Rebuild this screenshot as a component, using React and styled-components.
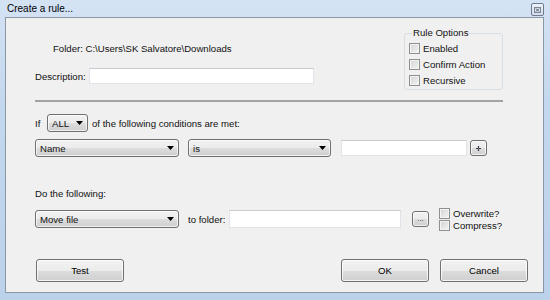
import React from 'react';
import styled, { createGlobalStyle } from 'styled-components';

const GlobalStyle = createGlobalStyle`
  html, body {
    margin: 0;
    padding: 0;
  }
  body {
    width: 550px;
    height: 300px;
    overflow: hidden;
    font-family: "Liberation Sans", Arial, sans-serif;
    font-size: 9.6px;
    color: #111;
  }
`;

const Frame = styled.div`
  width: 550px;
  height: 300px;
  box-sizing: border-box;
  display: flex;
  flex-direction: column;
  padding: 0 6px 7px 5px;
  background: linear-gradient(180deg, #d4e3f4 0%, #c3d7ee 35%, #bcd1ea 100%);
`;

const TitleBar = styled.div`
  height: 17px;
  display: flex;
  align-items: flex-start;
  justify-content: space-between;
  padding-left: 2px;
`;

const Title = styled.span`
  font-size: 10px;
  line-height: 17px;
  color: #000;
`;

const CloseButton = styled.div`
  width: 13px;
  height: 13px;
  margin-top: 3px;
  box-sizing: border-box;
  border: 1px solid #6f7b8a;
  border-radius: 2px;
  background: linear-gradient(180deg, #eef3f9, #d2dded);
  display: flex;
  align-items: center;
  justify-content: center;
`;

const Client = styled.div`
  flex: 1;
  display: flex;
  flex-direction: column;
  background: #f0f0f0;
  border: 1px solid #8a97a6;
  padding: 0 15px 0 29px;
`;

const TopSection = styled.div`
  display: flex;
  justify-content: space-between;
  align-items: flex-start;
  padding-top: 9px;
  margin-right: 25px;
`;

const LeftCol = styled.div`
  margin-top: 15px;
  display: flex;
  flex-direction: column;
`;

const FolderLine = styled.div`
  margin-left: 18px;
  line-height: 14px;
`;

const Row = styled.div`
  display: flex;
  align-items: center;
  height: ${p => p.h || 18}px;
  margin-top: ${p => p.mt || 0}px;
`;

const Label = styled.span`
  width: ${p => (p.w ? `${p.w}px` : 'auto')};
  margin-left: ${p => p.ml || 0}px;
  flex-shrink: 0;
  white-space: nowrap;
`;

const TextBox = styled.div`
  width: ${p => p.w}px;
  height: ${p => p.h || 16}px;
  margin-left: ${p => p.ml || 0}px;
  box-sizing: border-box;
  background: #fff;
  border: 1px solid #e2e3ea;
  border-top-color: #c9cbd2;
  flex-shrink: 0;
`;

const Group = styled.fieldset`
  margin: 0;
  width: 99px;
  box-sizing: border-box;
  padding: 1px 4px 1px 4px;
  border: 1px solid #d8dfe4;
  border-radius: 3px;
`;

const Legend = styled.legend`
  padding: 0 1px;
  margin-left: 3px;
  line-height: 12px;
  font-size: 9.6px;
`;

const CheckRow = styled.div`
  display: flex;
  align-items: center;
  height: ${p => p.h || 16}px;
`;

const Check = styled.span`
  width: 11px;
  height: 11px;
  box-sizing: border-box;
  border: 1px solid #8e8f8f;
  background: linear-gradient(135deg, #d2d2d2, #f4f4f4);
  box-shadow: inset 0 0 0 1px #f4f4f4;
  margin-right: 3px;
  flex-shrink: 0;
`;

const Separator = styled.div`
  margin-top: 10px;
  margin-right: 25px;
  height: 2px;
  background: #a3a3a3;
`;

const Combo = styled.div`
  width: ${p => p.w}px;
  height: 18px;
  margin-left: ${p => p.ml || 0}px;
  box-sizing: border-box;
  border: 1px solid #707070;
  border-radius: 3px;
  background: linear-gradient(180deg, #f2f2f2 0%, #ebebeb 50%, #dddddd 51%, #cfcfcf 100%);
  box-shadow: inset 0 0 0 1px rgba(255, 255, 255, 0.7);
  display: flex;
  align-items: center;
  justify-content: space-between;
  padding: 0 4px 0 4px;
  flex-shrink: 0;
`;

const Arrow = () => (
  <svg width="7" height="4" viewBox="0 0 7 4">
    <path d="M0 0 H7 L3.5 4 Z" fill="#000" />
  </svg>
);

const SmallButton = styled.div`
  width: 17px;
  height: 16px;
  margin-left: ${p => p.ml || 0}px;
  box-sizing: border-box;
  border: 1px solid #707070;
  border-radius: 3px;
  background: linear-gradient(180deg, #f2f2f2 0%, #ebebeb 50%, #dddddd 51%, #cfcfcf 100%);
  box-shadow: inset 0 0 0 1px rgba(255, 255, 255, 0.7);
  display: flex;
  align-items: center;
  justify-content: center;
  font-size: 8px;
  line-height: 8px;
  color: #333;
  flex-shrink: 0;
`;

const CheckStack = styled.div`
  margin-left: 10px;
  display: flex;
  flex-direction: column;
`;

const ButtonRow = styled.div`
  margin-top: 31px;
  display: flex;
  justify-content: space-between;
`;

const ButtonGroup = styled.div`
  display: flex;
  gap: 11px;
`;

const Button = styled.div`
  width: 88px;
  height: 23px;
  margin-left: ${p => p.ml || 0}px;
  box-sizing: border-box;
  border: 1px solid #707070;
  border-radius: 3px;
  background: linear-gradient(180deg, #f2f2f2 0%, #ebebeb 50%, #dddddd 51%, #cfcfcf 100%);
  box-shadow: inset 0 0 0 1px rgba(255, 255, 255, 0.75);
  display: flex;
  align-items: center;
  justify-content: center;
  color: #000;
`;

export default function App() {
  return (
    <Frame>
      <GlobalStyle />
      <TitleBar>
        <Title>Create a rule...</Title>
        <CloseButton>
          <svg width="7" height="6" viewBox="0 0 7 6">
            <rect x="0.5" y="0.5" width="6" height="5" fill="none" stroke="#7d8794" />
            <path d="M2 1.5 L5 4.5 M5 1.5 L2 4.5" stroke="#4a5463" strokeWidth="1" />
          </svg>
        </CloseButton>
      </TitleBar>
      <Client>
        <TopSection>
          <LeftCol>
            <FolderLine>Folder: C:\Users\SK Salvatore\Downloads</FolderLine>
            <Row h={16} mt={12}>
              <Label w={54}>Description:</Label>
              <TextBox w={225} />
            </Row>
          </LeftCol>
          <Group>
            <Legend>Rule Options</Legend>
            <CheckRow><Check />Enabled</CheckRow>
            <CheckRow><Check />Confirm Action</CheckRow>
            <CheckRow><Check />Recursive</CheckRow>
          </Group>
        </TopSection>

        <Separator />

        <Row mt={12}>
          <Label w={12}>If</Label>
          <Combo w={41}>ALL<Arrow /></Combo>
          <Label ml={4}>of the following conditions are met:</Label>
        </Row>

        <Row mt={7}>
          <Combo w={144}>Name<Arrow /></Combo>
          <Combo w={143} ml={9}>is<Arrow /></Combo>
          <TextBox w={126} ml={10} />
          <SmallButton ml={3}>
            <svg width="5" height="5" viewBox="0 0 5 5">
              <path d="M2.5 0 V5 M0 2.5 H5" stroke="#2b3a55" strokeWidth="1.2" />
              <rect x="2" y="2" width="1" height="1" fill="#c07020" />
            </svg>
          </SmallButton>
        </Row>

        <Row h={14} mt={29}>
          <Label>Do the following:</Label>
        </Row>

        <Row mt={10}>
          <Combo w={144}>Move file<Arrow /></Combo>
          <Label w={41} ml={9}>to folder:</Label>
          <TextBox w={172} h={18} />
          <SmallButton ml={11}>...</SmallButton>
          <CheckStack>
            <CheckRow h={12}><Check />Overwrite?</CheckRow>
            <CheckRow h={12}><Check />Compress?</CheckRow>
          </CheckStack>
        </Row>

        <ButtonRow>
          <Button ml={1}>Test</Button>
          <ButtonGroup>
            <Button>OK</Button>
            <Button>Cancel</Button>
          </ButtonGroup>
        </ButtonRow>
      </Client>
    </Frame>
  );
}
